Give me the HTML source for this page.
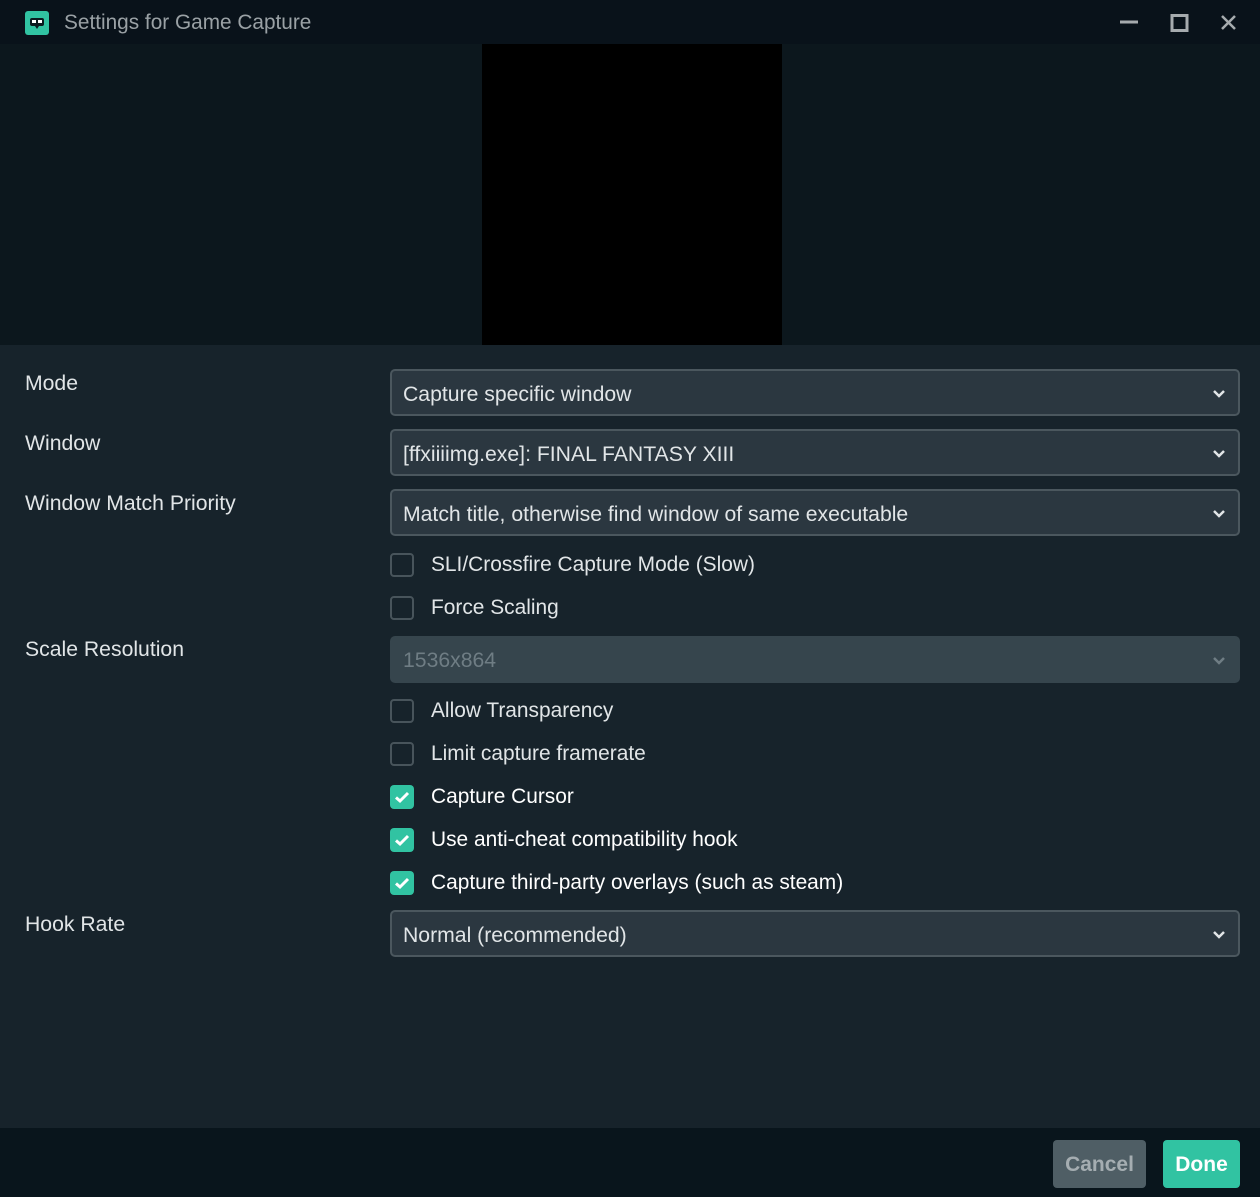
<!DOCTYPE html>
<html><head><style>
*{box-sizing:border-box;margin:0;padding:0}
body{width:1260px;height:1197px;background:#17232b;font-family:"Liberation Sans",sans-serif;position:relative;overflow:hidden;color:#dfe3e5}
.tb{position:absolute;left:0;top:0;width:1260px;height:44px;background:#09121a}
.prev{position:absolute;left:0;top:44px;width:1260px;height:301px;background:#0c171d}
.blk{position:absolute;left:482px;top:44px;width:300px;height:301px;background:#000}
.foot{position:absolute;left:0;top:1128px;width:1260px;height:69px;background:#09151c}
.lbl{position:absolute;left:25px;font-size:21.2px;color:#e1e5e7;line-height:24px}
.sel{position:absolute;left:390px;width:850px;height:47px;background:#2b3740;border:2px solid #4b575e;border-radius:5px;font-size:21.2px;line-height:47px;padding-left:11px;color:#e1e5e7}
.sel.dis{background:#36454d;border:none;color:#6f7d84;padding-left:13px;line-height:49px}
.sel svg{position:absolute;right:12px;top:18px}
.sel.dis svg{right:14px;top:20px}
.cb{position:absolute;left:390px;width:24px;height:24px;border:2px solid #48545b;border-radius:4px}
.cb.on{background:#31c3a2;border:none}
.ct{position:absolute;left:431px;font-size:20.9px;line-height:26px;color:#e1e5e7}
.btn{position:absolute;top:1140px;height:48px;border-radius:4px;font-size:21px;font-weight:bold;line-height:50px;text-align:center}
</style></head><body>
<div class="tb">
<div style="position:absolute;left:25px;top:11px;width:24px;height:24px;background:#31c3a2;border-radius:3px">
<svg width="24" height="24" viewBox="0 0 24 24"><rect x="5" y="7" width="14" height="8" rx="2" fill="#0b1a1f"/><rect x="7" y="9" width="4" height="3" fill="#fff"/><rect x="13" y="9" width="4" height="3" fill="#fff"/><path d="M10 15 L12 18 L14 15" fill="#0b1a1f"/></svg></div>
<div style="position:absolute;left:64px;top:11px;font-size:20.8px;color:#9aa1a5;line-height:24px">Settings for Game Capture</div>
<svg style="position:absolute;left:1118px;top:14px" width="130" height="18"><path d="M2 8H20" stroke="#a6abae" stroke-width="3"/><rect x="54" y="1.5" width="15" height="15" fill="none" stroke="#a6abae" stroke-width="3"/><path d="M104 2L117 15M117 2L104 15" stroke="#a6abae" stroke-width="2.5"/></svg>
</div>
<div class="prev"></div><div class="blk"></div>

<div class="lbl" style="top:372px">Mode</div>
<div class="lbl" style="top:432px">Window</div>
<div class="lbl" style="top:492px">Window Match Priority</div>
<div class="lbl" style="top:638px">Scale Resolution</div>
<div class="lbl" style="top:913px">Hook Rate</div>

<div class="sel" style="top:369px">Capture specific window<svg width="14" height="9"><path d="M2 2L7 7L12 2" fill="none" stroke="#e1e5e7" stroke-width="2.5"/></svg></div>
<div class="sel" style="top:429px">[ffxiiiimg.exe]: FINAL FANTASY XIII<svg width="14" height="9"><path d="M2 2L7 7L12 2" fill="none" stroke="#e1e5e7" stroke-width="2.5"/></svg></div>
<div class="sel" style="top:489px">Match title, otherwise find window of same executable<svg width="14" height="9"><path d="M2 2L7 7L12 2" fill="none" stroke="#e1e5e7" stroke-width="2.5"/></svg></div>
<div class="sel dis" style="top:636px">1536x864<svg width="14" height="9"><path d="M2 2L7 7L12 2" fill="none" stroke="#6f7d84" stroke-width="2.5"/></svg></div>
<div class="sel" style="top:910px">Normal (recommended)<svg width="14" height="9"><path d="M2 2L7 7L12 2" fill="none" stroke="#e1e5e7" stroke-width="2.5"/></svg></div>

<div class="cb" style="top:553px"></div><div class="ct" style="top:552px">SLI/Crossfire Capture Mode (Slow)</div>
<div class="cb" style="top:596px"></div><div class="ct" style="top:595px">Force Scaling</div>
<div class="cb" style="top:699px"></div><div class="ct" style="top:698px">Allow Transparency</div>
<div class="cb" style="top:742px"></div><div class="ct" style="top:741px">Limit capture framerate</div>
<div class="cb on" style="top:785px"><svg width="24" height="24"><path d="M6 12.5L10 16L18 8" fill="none" stroke="#fff" stroke-width="3"/></svg></div><div class="ct" style="top:784px;color:#fff">Capture Cursor</div>
<div class="cb on" style="top:828px"><svg width="24" height="24"><path d="M6 12.5L10 16L18 8" fill="none" stroke="#fff" stroke-width="3"/></svg></div><div class="ct" style="top:827px;color:#fff">Use anti-cheat compatibility hook</div>
<div class="cb on" style="top:871px"><svg width="24" height="24"><path d="M6 12.5L10 16L18 8" fill="none" stroke="#fff" stroke-width="3"/></svg></div><div class="ct" style="top:870px;color:#fff">Capture third-party overlays (such as steam)</div>

<div class="foot"></div>
<div class="btn" style="left:1053px;width:93px;background:#4f5e65;color:#a5adb1">Cancel</div>
<div class="btn" style="left:1163px;width:77px;background:#31c3a2;color:#fff">Done</div>
</body></html>
